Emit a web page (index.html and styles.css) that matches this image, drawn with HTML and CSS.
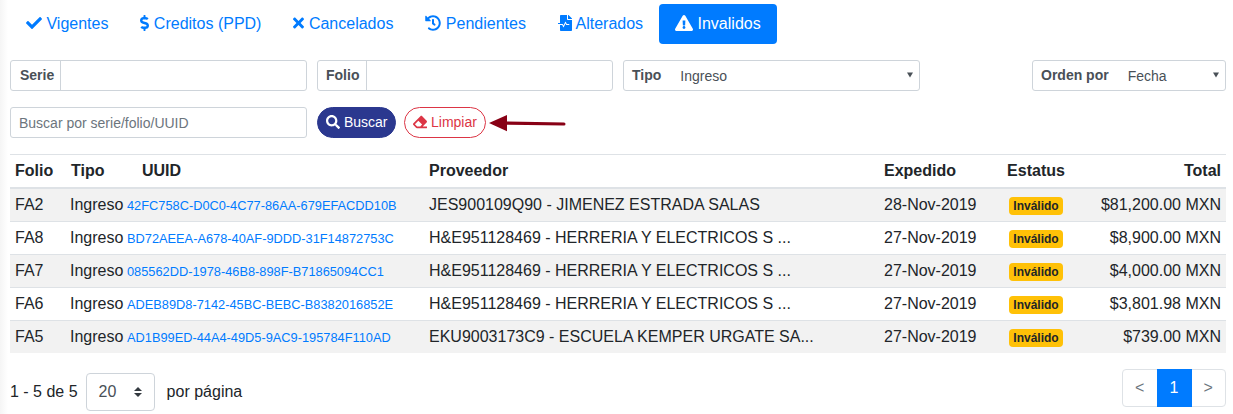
FILE: index.html
```html
<!DOCTYPE html>
<html lang="es">
<head>
<meta charset="utf-8">
<title>Comprobantes</title>
<link rel="stylesheet" href="styles.css">
</head>
<body>
<main class="page">
  <nav class="tabs">
    <a class="tab"><svg class="icon" style="width:16px" viewBox="0 0 512 512"><path d="M173.898 439.404l-166.4-166.4c-9.997-9.997-9.997-26.206 0-36.204l36.203-36.204c9.997-9.998 26.207-9.998 36.204 0L192 312.69 432.095 72.596c9.997-9.997 26.207-9.997 36.204 0l36.203 36.204c9.997 9.997 9.997 26.206 0 36.204l-294.4 294.401c-9.998 9.997-26.207 9.997-36.204-.001z"/></svg> Vigentes</a>
    <a class="tab"><svg class="icon" style="width:9px" viewBox="0 0 288 512"><path d="M209.2 233.4l-108-31.6C88.7 198.2 80 186.5 80 173.5c0-16.3 13.2-29.5 29.5-29.5h66.3c12.2 0 24.2 3.7 34.2 10.5 6.1 4.1 14.3 3.1 19.5-2l34.8-34c7.1-6.9 6.1-18.4-1.8-24.5C238 74.8 207.4 64.1 176 64V16c0-8.8-7.2-16-16-16h-32c-8.8 0-16 7.2-16 16v48h-2.5C45.8 64-5.4 118.7.5 183.6c4.2 46.1 39.4 83.6 83.8 96.6l102.5 30c12.5 3.7 21.2 15.3 21.2 28.3 0 16.3-13.2 29.5-29.5 29.5h-66.3C100 368 88 364.3 78 357.5c-6.1-4.1-14.3-3.1-19.5 2l-34.8 34c-7.1 6.9-6.1 18.4 1.8 24.5 24.5 19.2 55.1 29.9 86.5 30v48c0 8.8 7.2 16 16 16h32c8.8 0 16-7.2 16-16v-48.2c46.6-.9 90.3-28.6 105.7-72.7 21.5-61.6-14.6-124.8-72.5-141.7z"/></svg> Creditos (PPD)</a>
    <a class="tab"><svg class="icon" style="width:11px" viewBox="0 0 352 512"><path d="M242.72 256l100.07-100.07c12.28-12.28 12.28-32.19 0-44.48l-22.24-22.24c-12.28-12.28-32.19-12.28-44.48 0L176 189.28 75.93 89.21c-12.28-12.28-32.19-12.28-44.48 0L9.21 111.45c-12.28 12.28-12.28 32.19 0 44.48L109.28 256 9.21 356.07c-12.28 12.28-12.28 32.19 0 44.48l22.24 22.24c12.28 12.28 32.2 12.28 44.48 0L176 322.72l100.07 100.07c12.28 12.28 32.2 12.28 44.48 0l22.24-22.24c12.28-12.28 12.28-32.19 0-44.48L242.72 256z"/></svg> Cancelados</a>
    <a class="tab"><svg class="icon" style="width:16px" viewBox="0 0 512 512"><path d="M504 255.531c.253 136.64-111.18 248.372-247.82 248.468-59.015.042-113.223-20.53-155.822-54.911-11.077-8.94-11.905-25.541-1.839-35.607l11.267-11.267c8.609-8.609 22.353-9.551 31.891-1.984C173.062 425.135 212.781 440 256 440c101.705 0 184-82.311 184-184 0-101.705-82.311-184-184-184-48.814 0-93.149 18.969-126.068 49.932l50.754 50.754c10.08 10.08 2.941 27.314-11.313 27.314H24c-8.837 0-16-7.163-16-16V38.627c0-14.254 17.234-21.393 27.314-11.314l49.372 49.372C129.209 34.136 189.552 8 256 8c136.81 0 247.747 110.78 248 247.531zm-180.912 78.784l9.823-12.63c8.138-10.463 6.253-25.542-4.21-33.679L288 256.349V152c0-13.255-10.745-24-24-24h-16c-13.255 0-24 10.745-24 24v135.651l65.409 50.874c10.463 8.137 25.541 6.253 33.679-4.21z"/></svg> Pendientes</a>
    <a class="tab"><svg class="icon" style="width:14px" viewBox="0 0 448 512"><path d="M288 136V0H88C74.7 0 64 10.7 64 24v232H8c-4.4 0-8 3.6-8 8v16c0 4.4 3.6 8 8 8h140.9c3 0 5.8 1.7 7.2 4.4l19.9 39.8 56.8-113.7c2.9-5.9 11.4-5.9 14.3 0l34.7 69.5H352c8.8 0 16 7.2 16 16s-7.2 16-16 16h-89.9L240 275.8l-56.8 113.7c-2.9 5.9-11.4 5.9-14.3 0L134.1 320H64v168c0 13.3 10.7 24 24 24h336c13.3 0 24-10.7 24-24V160H312c-13.2 0-24-10.8-24-24zm153-31L343.1 7c-4.5-4.5-10.6-7-17-7H320v128h128v-6.1c0-6.3-2.5-12.4-7-16.9z"/></svg> Alterados</a>
    <a class="tab tab-active"><svg class="icon" style="width:18px" viewBox="0 0 576 512"><path d="M569.517 440.013C587.975 472.007 564.806 512 527.94 512H48.054c-36.937 0-59.999-40.055-41.577-71.987L246.423 23.985c18.467-32.009 64.72-31.951 83.154 0l239.94 416.028zM288 354c-25.405 0-46 20.595-46 46s20.595 46 46 46 46-20.595 46-46-20.595-46-46-46zm-43.673-165.346l7.418 136c.347 6.364 5.609 11.346 11.982 11.346h48.546c6.373 0 11.635-4.982 11.982-11.346l7.418-136c.375-6.874-5.098-12.654-11.982-12.654h-63.383c-6.884 0-12.356 5.78-11.981 12.654z"/></svg> Invalidos</a>
  </nav>

  <section class="filters">
    <div class="group"><span class="label">Serie</span><span class="field"></span></div>
    <div class="group"><span class="label">Folio</span><span class="field"></span></div>
    <div class="group"><span class="label label-open">Tipo</span><span class="choice">Ingreso</span><svg class="caret" viewBox="0 0 7 6"><path d="M0 0h7L3.5 6z"/></svg></div>
    <div class="group group-order"><span class="label label-open">Orden por</span><span class="choice">Fecha</span><svg class="caret" viewBox="0 0 7 6"><path d="M0 0h7L3.5 6z"/></svg></div>
  </section>

  <section class="search">
    <div class="group placeholder">Buscar por serie/folio/UUID</div>
    <button class="btn btn-primary"><svg class="icon" style="width:14px" viewBox="0 0 512 512"><path d="M505 442.7L405.3 343c-4.5-4.5-10.6-7-17-7H372c27.6-35.3 44-79.7 44-128C416 93.1 322.9 0 208 0S0 93.1 0 208s93.1 208 208 208c48.3 0 92.7-16.4 128-44v16.3c0 6.4 2.5 12.5 7 17l99.7 99.7c9.4 9.4 24.6 9.4 33.9 0l28.3-28.3c9.4-9.4 9.4-24.6.1-34zM208 336c-70.7 0-128-57.2-128-128 0-70.7 57.2-128 128-128 70.7 0 128 57.2 128 128 0 70.7-57.2 128-128 128z"/></svg> Buscar</button>
    <button class="btn btn-danger"><svg class="icon" style="width:14px" viewBox="0 0 512 512"><path d="M497.941 273.941c18.745-18.745 18.745-49.137 0-67.882l-160-160c-18.745-18.745-49.136-18.746-67.883 0l-256 256c-18.745 18.745-18.745 49.137 0 67.882l96 96A48.004 48.004 0 0 0 144 480h356c6.627 0 12-5.373 12-12v-40c0-6.627-5.373-12-12-12H355.883l142.058-142.059zm-302.627-62.627l137.373 137.373L265.373 416H150.628l-80-80 124.686-124.686z"/></svg> Limpiar</button>
    <svg class="arrow" viewBox="0 0 78 18"><path d="M0 9L18 1V7.500L75 8.500Q76.500 8.500 76.500 10T75 11.500L18 10.700V17.200z"/></svg>
  </section>

  <table class="table">
    <colgroup><col class="c-folio"><col class="c-tipo"><col class="c-uuid"><col class="c-prov"><col class="c-date"><col class="c-status"><col class="c-total"></colgroup>
    <thead><tr><th>Folio</th><th class="h-tipo">Tipo</th><th class="h-uuid">UUID</th><th>Proveedor</th><th>Expedido</th><th class="center">Estatus</th><th class="right">Total</th></tr></thead>
    <tbody>
      <tr><td>FA2</td><td>Ingreso</td><td><a class="uuid">42FC758C-D0C0-4C77-86AA-679EFACDD10B</a></td><td>JES900109Q90 - JIMENEZ ESTRADA SALAS</td><td>28-Nov-2019</td><td class="center"><span class="badge">Inválido</span></td><td class="right">$81,200.00 MXN</td></tr>
      <tr><td>FA8</td><td>Ingreso</td><td><a class="uuid">BD72AEEA-A678-40AF-9DDD-31F14872753C</a></td><td>H&amp;E951128469 - HERRERIA Y ELECTRICOS S ...</td><td>27-Nov-2019</td><td class="center"><span class="badge">Inválido</span></td><td class="right">$8,900.00 MXN</td></tr>
      <tr><td>FA7</td><td>Ingreso</td><td><a class="uuid">085562DD-1978-46B8-898F-B71865094CC1</a></td><td>H&amp;E951128469 - HERRERIA Y ELECTRICOS S ...</td><td>27-Nov-2019</td><td class="center"><span class="badge">Inválido</span></td><td class="right">$4,000.00 MXN</td></tr>
      <tr><td>FA6</td><td>Ingreso</td><td><a class="uuid">ADEB89D8-7142-45BC-BEBC-B8382016852E</a></td><td>H&amp;E951128469 - HERRERIA Y ELECTRICOS S ...</td><td>27-Nov-2019</td><td class="center"><span class="badge">Inválido</span></td><td class="right">$3,801.98 MXN</td></tr>
      <tr><td>FA5</td><td>Ingreso</td><td><a class="uuid">AD1B99ED-44A4-49D5-9AC9-195784F110AD</a></td><td>EKU9003173C9 - ESCUELA KEMPER URGATE SA...</td><td>27-Nov-2019</td><td class="center"><span class="badge">Inválido</span></td><td class="right">$739.00 MXN</td></tr>
    </tbody>
  </table>

  <footer class="footer">
    <div class="sizer">
      <span>1 - 5 de 5</span>
      <div class="select"><span>20</span><svg class="updown" viewBox="0 0 4 5"><path d="M2 0L0 2h4zm0 5L0 3h4z"/></svg></div>
      <span>por página</span>
    </div>
    <div class="pager"><span class="pg">&lt;</span><span class="pg pg-active">1</span><span class="pg">&gt;</span></div>
  </footer>
</main>
</body>
</html>
```

FILE: styles.css
```css
* { box-sizing: border-box; }
body {
  margin: 0;
  height: 414px;
  overflow: hidden;
  background: linear-gradient(to right, #f5f5f5, #fff 8px);
  color: #212529;
  font: 16px/24px "Liberation Sans", Arial, sans-serif;
}
.page { padding: 4px 7px 0 10px; }
.icon { height: 1em; vertical-align: -2px; fill: currentColor; }

.tabs { display: flex; }
.tab { padding: 8px 16px; color: #007bff; white-space: nowrap; border-radius: 4px; }
.tab-active { background: #007bff; color: #fff; }

.filters { display: flex; gap: 10px; margin-top: 16px; }
.group {
  display: flex;
  align-items: center;
  width: 297px;
  height: 31px;
  border: 1px solid #ced4da;
  border-radius: 3px;
  background: #fff;
  color: #495057;
  font-size: 14px;
  line-height: 21px;
}
.filters .group:nth-child(2) { width: 296px; }
.group-order { width: 194px; margin-left: auto; }
.label { padding: 0 6px 0 9px; font-weight: bold; border-right: 1px solid #ced4da; line-height: 29px; }
.filters .group:nth-child(2) .label { padding: 0 7px 0 8px; }
.label.label-open { border-right: 0; padding: 0 7px 0 8px; }
.field { flex: 1; }
.choice { flex: 1; padding: 2px 0 0 12px; }
.caret { width: 6px; height: 6px; margin: 0 6px 1px 0; fill: #495057; }

.search { display: flex; align-items: center; margin-top: 16px; }
.placeholder { padding: 2px 8px 0; color: #6c757d; margin-right: 10px; }
.btn {
  height: 31px;
  padding: 0 8px;
  border: 1px solid;
  border-radius: 16px;
  font: 14px/21px "Liberation Sans", Arial, sans-serif;
  white-space: nowrap;
}
.btn-primary { width: 79px; background: #2b388f; border-color: #2b388f; color: #fff; margin-right: 8px; }
.btn-danger { width: 82px; background: #fff; border-color: #dc3545; color: #dc3545; }
.arrow { width: 78px; height: 18px; margin-left: 3px; fill: #880015; }

.table { width: 1216px; margin-top: 16px; table-layout: fixed; border-spacing: 0; white-space: nowrap; }
.c-folio { width: 55px; }
.c-tipo { width: 57px; }
.c-uuid { width: 302px; }
.c-prov { width: 455px; }
.c-date { width: 123px; }
.c-status { width: 68px; }
.c-total { width: 156px; }
th, td { padding: 0 5px; text-align: left; }
th { height: 35px; border-top: 1px solid #dee2e6; border-bottom: 2px solid #dee2e6; }
td { height: 33px; border-top: 1px solid #dee2e6; }
tbody tr:first-child td { height: 32px; border-top: 0; }
tbody tr:nth-child(odd) { background: #f2f2f2; }
.h-tipo { padding-left: 6px; }
.h-uuid { padding-left: 20px; }
.center { text-align: center; }
.right { text-align: right; }
.uuid { color: #007bff; font-size: 12.8px; }
.badge {
  display: inline-block;
  padding: 3px 4.500px;
  border-radius: 4px;
  background: #ffc107;
  font-size: 12px;
  font-weight: bold;
  line-height: 12px;
}

.footer { display: flex; justify-content: space-between; align-items: flex-start; margin-top: 16px; }
.sizer { display: flex; align-items: center; margin-top: 4px; }
.select {
  display: flex;
  align-items: center;
  justify-content: space-between;
  width: 69px;
  height: 38px;
  margin: 0 12px 0 8px;
  padding: 0 12px;
  border: 1px solid #ced4da;
  border-radius: 4px;
  color: #495057;
  background: #fff;
}
.updown { width: 8px; height: 10px; fill: #343a40; }
.pager { display: flex; width: 104px; height: 38px; border: 1px solid #dee2e6; border-radius: 4px; background: #fff; }
.pg { flex: 1; text-align: center; line-height: 36px; color: #6c757d; }
.pg-active { flex: 0 0 35px; margin: -1px 0; line-height: 38px; background: #007bff; color: #fff; }
```
